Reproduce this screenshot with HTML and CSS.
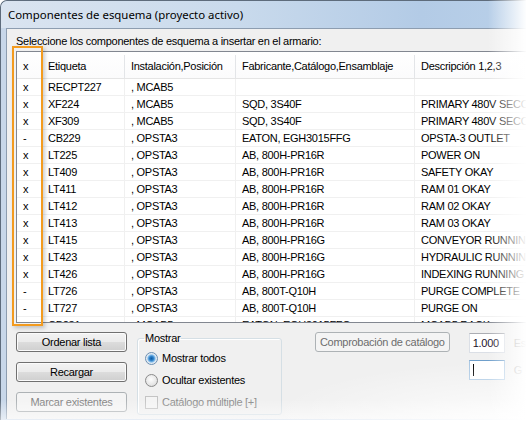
FILE: index.html
```html
<!DOCTYPE html>
<html lang="es">
<head>
  <meta charset="UTF-8">
  <title>Componentes de esquema</title>
  <link rel="stylesheet" href="styles.css">
</head>
<body>

  <div class="window">
    <div class="titlebar">Componentes de esquema (proyecto activo)</div>
    <div class="client">
      <div class="prompt">Seleccione los componentes de esquema a insertar en el armario:</div>

      <div class="list">
        <div class="row head">
          <div class="cell">x</div>
          <div class="cell">Etiqueta</div>
          <div class="cell">Instalación,Posición</div>
          <div class="cell">Fabricante,Catálogo,Ensamblaje</div>
          <div class="cell">Descripción 1,2,3</div>
        </div>
        <div class="row">
          <div class="cell">x</div><div class="cell">RECPT227</div><div class="cell">, MCAB5</div><div class="cell"></div><div class="cell"></div>
        </div>
        <div class="row">
          <div class="cell">x</div><div class="cell">XF224</div><div class="cell">, MCAB5</div><div class="cell">SQD, 3S40F</div><div class="cell">PRIMARY 480V SECO</div>
        </div>
        <div class="row">
          <div class="cell">x</div><div class="cell">XF309</div><div class="cell">, MCAB5</div><div class="cell">SQD, 3S40F</div><div class="cell">PRIMARY 480V SECO</div>
        </div>
        <div class="row">
          <div class="cell">-</div><div class="cell">CB229</div><div class="cell">, OPSTA3</div><div class="cell">EATON, EGH3015FFG</div><div class="cell">OPSTA-3 OUTLET</div>
        </div>
        <div class="row">
          <div class="cell">x</div><div class="cell">LT225</div><div class="cell">, OPSTA3</div><div class="cell">AB, 800H-PR16R</div><div class="cell">POWER ON</div>
        </div>
        <div class="row">
          <div class="cell">x</div><div class="cell">LT409</div><div class="cell">, OPSTA3</div><div class="cell">AB, 800H-PR16R</div><div class="cell">SAFETY OKAY</div>
        </div>
        <div class="row">
          <div class="cell">x</div><div class="cell">LT411</div><div class="cell">, OPSTA3</div><div class="cell">AB, 800H-PR16R</div><div class="cell">RAM 01 OKAY</div>
        </div>
        <div class="row">
          <div class="cell">x</div><div class="cell">LT412</div><div class="cell">, OPSTA3</div><div class="cell">AB, 800H-PR16R</div><div class="cell">RAM 02 OKAY</div>
        </div>
        <div class="row">
          <div class="cell">x</div><div class="cell">LT413</div><div class="cell">, OPSTA3</div><div class="cell">AB, 800H-PR16R</div><div class="cell">RAM 03 OKAY</div>
        </div>
        <div class="row">
          <div class="cell">x</div><div class="cell">LT415</div><div class="cell">, OPSTA3</div><div class="cell">AB, 800H-PR16G</div><div class="cell">CONVEYOR RUNNIN</div>
        </div>
        <div class="row">
          <div class="cell">x</div><div class="cell">LT423</div><div class="cell">, OPSTA3</div><div class="cell">AB, 800H-PR16G</div><div class="cell">HYDRAULIC RUNNIN</div>
        </div>
        <div class="row">
          <div class="cell">x</div><div class="cell">LT426</div><div class="cell">, OPSTA3</div><div class="cell">AB, 800H-PR16G</div><div class="cell">INDEXING RUNNING</div>
        </div>
        <div class="row">
          <div class="cell">-</div><div class="cell">LT726</div><div class="cell">, OPSTA3</div><div class="cell">AB, 800T-Q10H</div><div class="cell">PURGE COMPLETE</div>
        </div>
        <div class="row">
          <div class="cell">-</div><div class="cell">LT727</div><div class="cell">, OPSTA3</div><div class="cell">AB, 800T-Q10H</div><div class="cell">PURGE ON</div>
        </div>
        <div class="row">
          <div class="cell">-</div><div class="cell">CB231</div><div class="cell">, MCAB5</div><div class="cell">EATON, EGH3015FFG</div><div class="cell">MCAB5 RACK</div>
        </div>
      </div>

      <div class="controls">
        <div class="btn-col">
          <button class="btn">Ordenar lista</button>
          <button class="btn">Recargar</button>
          <button class="btn" disabled>Marcar existentes</button>
        </div>

        <fieldset class="group">
          <legend>Mostrar</legend>
          <div class="option"><span class="radio on"></span>Mostrar todos</div>
          <div class="option"><span class="radio"></span>Ocultar existentes</div>
          <div class="option off"><span class="check"></span>Catálogo múltiple [+]</div>
        </fieldset>

        <button class="btn wide" disabled>Comprobación de catálogo</button>

        <div class="fields">
          <div class="field"><div class="tb">1.000</div><span class="field-label">Es</span></div>
          <div class="field"><div class="tb focus"><span class="caret"></span></div><span class="field-label">G</span></div>
        </div>
      </div>
    </div>
  </div>

  <div class="mark"></div>
  <div class="fade"></div>

</body>
</html>
```

FILE: styles.css
```css
body {
  margin: 0;
  width: 527px;
  height: 421px;
  overflow: hidden;
  position: relative;
  background: #fff;
  font-family: "Liberation Sans", Arial, sans-serif;
  font-size: 11px;
  letter-spacing: -0.28px;
  color: #000;
}

.window {
  width: 520px;
  height: 419px;
  border: 1px solid #5e6c7c;
  border-right: none;
  border-bottom: none;
  border-radius: 7px 0 0 0;
  padding-left: 5px;
  background: #c8d7e9;
  overflow: hidden;
}

.titlebar {
  margin-left: -5px;
  padding-left: 7px;
  height: 27px;
  line-height: 27px;
  border-radius: 6px 0 0 0;
  background: linear-gradient(to right, #dae4f0 0, #c9daec 45%, #b3cbe6 80%, #b9d0e9 100%);
  font-family: "Noto Sans", "Open Sans", sans-serif;
  font-size: 11.4px;
  letter-spacing: 0;
  color: #000;
}

.client {
  border-top: 1px solid #8d9db0;
  border-left: 1px solid #8d9db0;
  background: #f0f0f0;
  height: 391px;
  padding-top: 6px;
  box-sizing: border-box;
}

.prompt {
  line-height: 13px;
  padding-left: 9px;
}

/* list view */

.list {
  margin: 3px 0 0 9px;
  height: 270px;
  border: 1px solid #828790;
  border-right: none;
  background: #fff;
  overflow: hidden;
}

.row {
  display: grid;
  grid-template-columns: 25px 83px 111px 179px 1fr;
  height: 17px;
  border-bottom: 1px solid #f0f0f0;
  box-sizing: border-box;
}

.cell {
  padding: 1px 0 0 6px;
  line-height: 15px;
  white-space: nowrap;
  overflow: hidden;
  border-right: 1px solid #f0f0f0;
}

.row .cell:last-child {
  border-right: none;
}

.head {
  height: 27px;
  border-bottom: 1px solid #e5e5e5;
  background: linear-gradient(#ffffff, #fbfbfc);
}

.head .cell {
  padding-top: 7px;
  border-right: none;
  background: linear-gradient(#e3e5e8, #e3e5e8) no-repeat right 3px / 1px 100%;
}

.head .cell:last-child {
  background: none;
}

/* bottom controls */

.controls {
  display: flex;
  align-items: flex-start;
  margin: 9px 0 0 9px;
}

.btn-col {
  display: flex;
  flex-direction: column;
  gap: 10px;
  width: 112px;
}

.btn {
  height: 20px;
  padding: 0;
  border: 1px solid #707070;
  border-radius: 3px;
  background: linear-gradient(#f3f3f3 0, #ebebeb 50%, #dddddd 50%, #cfcfcf 100%);
  font-family: "Liberation Sans", Arial, sans-serif;
  font-size: 11px;
  letter-spacing: -0.28px;
  color: #000;
  box-shadow: inset 0 0 0 1px #fbfbfb;
}

.btn:disabled {
  border-color: #adb2b5;
  background: #f4f4f4;
  color: #838383;
  box-shadow: none;
}

.group {
  margin: 0 0 0 10px;
  padding: 2px 6px 4px 7px;
  width: 146px;
  height: 83px;
  box-sizing: border-box;
  border: 1px solid #d5dfe5;
  border-radius: 3px;
  box-shadow: inset 1px 1px 0 #fff;
}

.group legend {
  padding: 0 1px;
  margin-left: -1px;
  line-height: 13px;
}

.option {
  display: flex;
  align-items: center;
  gap: 4px;
  height: 22px;
}

.option.off {
  color: #8d8d8d;
}

.radio {
  width: 13px;
  height: 13px;
  border-radius: 50%;
  box-sizing: border-box;
  border: 1px solid #8b8b8b;
  background: radial-gradient(circle at 45% 40%, #fdfdfd 0, #e6e6e6 60%, #cfcfcf 100%);
}

.radio.on {
  border-color: #6b8fb3;
  background: radial-gradient(circle at 50% 50%, #0d5ba6 0, #2d7fc6 2px, #7bb7e8 3.5px, #d6e6f4 4.5px, #eeeeee 5.5px);
}

.check {
  width: 13px;
  height: 13px;
  box-sizing: border-box;
  border: 1px solid #c4c4c4;
  background: #f4f4f4;
}

.btn.wide {
  width: 136px;
  margin-left: 33px;
  color: #6d6d6d;
}

.fields {
  display: flex;
  flex-direction: column;
  gap: 7px;
  margin-left: 19px;
  padding-top: 1px;
}

.field {
  display: flex;
  align-items: center;
  gap: 9px;
}

.tb {
  width: 36px;
  height: 20px;
  box-sizing: border-box;
  border: 1px solid #dbdfe6;
  border-top-color: #abadb3;
  background: #fff;
  padding: 3px 0 0 3px;
  line-height: 13px;
  color: #1b0f2a;
}

.tb.focus {
  border-color: #a9c7e3;
  border-top-color: #6f9fcb;
}

.caret {
  display: block;
  width: 1px;
  height: 12px;
  background: #000;
}

.field-label {
  color: #9a9a9a;
}

/* overlays */

.mark {
  position: absolute;
  left: 12px;
  top: 46px;
  width: 31px;
  height: 280px;
  box-sizing: border-box;
  border: 2px solid #f39b1f;
  box-shadow: 2px 2px 4px rgba(0, 0, 0, 0.2);
}

.fade {
  position: absolute;
  left: 0;
  top: 0;
  width: 527px;
  height: 421px;
  pointer-events: none;
  background:
    linear-gradient(to right, rgba(255, 255, 255, 0) 488px, rgba(255, 255, 255, 0.55) 510px, #fff 527px),
    radial-gradient(ellipse 260px 60px at 527px 421px, rgba(255, 255, 255, 0.9), rgba(255, 255, 255, 0)),
    linear-gradient(to bottom, rgba(255, 255, 255, 0) 400px, rgba(255, 255, 255, 0.6) 421px);
}
```
